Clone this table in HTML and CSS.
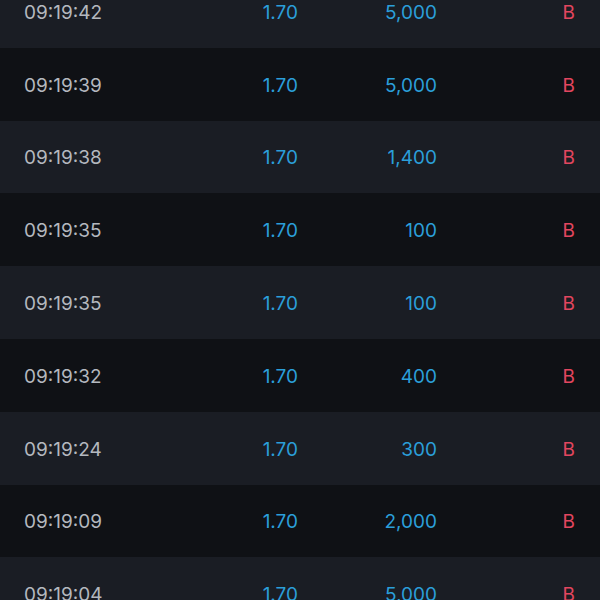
FILE: index.html
```html
<!DOCTYPE html>
<html>
<head>
<meta charset="utf-8">
<link rel="stylesheet" href="styles.css">
</head>
<body>
<div class="list">
  <div class="row light"><span class="time">09:19:42</span><span class="num">1.70</span><span class="num">5,000</span><span class="side">B</span></div>
  <div class="row dark"><span class="time">09:19:39</span><span class="num">1.70</span><span class="num">5,000</span><span class="side">B</span></div>
  <div class="row light"><span class="time">09:19:38</span><span class="num">1.70</span><span class="num">1,400</span><span class="side">B</span></div>
  <div class="row dark"><span class="time">09:19:35</span><span class="num">1.70</span><span class="num">100</span><span class="side">B</span></div>
  <div class="row light"><span class="time">09:19:35</span><span class="num">1.70</span><span class="num">100</span><span class="side">B</span></div>
  <div class="row dark"><span class="time">09:19:32</span><span class="num">1.70</span><span class="num">400</span><span class="side">B</span></div>
  <div class="row light"><span class="time">09:19:24</span><span class="num">1.70</span><span class="num">300</span><span class="side">B</span></div>
  <div class="row dark"><span class="time">09:19:09</span><span class="num">1.70</span><span class="num">2,000</span><span class="side">B</span></div>
  <div class="row light"><span class="time">09:19:04</span><span class="num">1.70</span><span class="num">5,000</span><span class="side">B</span></div>
</div>
</body>
</html>
```
FILE: styles.css
```css
html, body {
  margin: 0;
  padding: 0;
  background: #0f1115;
  overflow: hidden;
  height: 600px;
}
.list {
  margin-top: -25px;
  font-family: Inter, "Open Sans", sans-serif;
  font-size: 19px;
}
.row {
  height: 72.8px;
  box-sizing: border-box;
  display: grid;
  grid-template-columns: 200px 74px 139px 138px;
  align-items: center;
  padding: 2px 25px 0 24px;
}
.light { background: #1a1d24; }
.dark { background: #0f1115; }
.time { color: #b4b8bf; }
.num { color: #2b9fd9; text-align: right; }
.side { color: #e2465f; text-align: right; }
```
